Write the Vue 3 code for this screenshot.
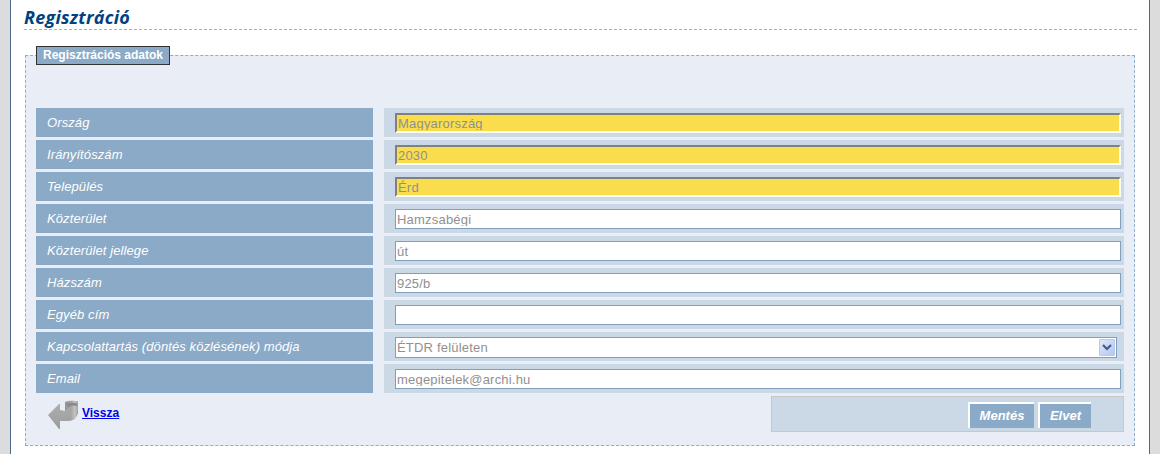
<script setup>
const rows = [
  { label: 'Ország', value: 'Magyarország', required: true },
  { label: 'Irányítószám', value: '2030', required: true },
  { label: 'Település', value: 'Érd', required: true },
  { label: 'Közterület', value: 'Hamzsabégi' },
  { label: 'Közterület jellege', value: 'út' },
  { label: 'Házszám', value: '925/b' },
  { label: 'Egyéb cím', value: '' },
  { label: 'Kapcsolattartás (döntés közlésének) módja', value: 'ÉTDR felületen', select: true },
  { label: 'Email', value: 'megepitelek@archi.hu' }
]
</script>

<template>
  <div class="page">
    <main class="sheet">
      <h1 class="title">Regisztráció</h1>
      <section class="panel">
        <div class="legend">Regisztrációs adatok</div>
        <div class="rows">
          <div v-for="row in rows" :key="row.label" class="row">
            <div class="label">{{ row.label }}</div>
            <div class="cell">
              <div v-if="row.select" class="select-wrap">
                <select class="select"><option>{{ row.value }}</option></select>
                <span class="select-btn">
                  <svg width="10" height="7" viewBox="0 0 10 7"><path d="M1 1 L5 5 L9 1" fill="none" stroke="#4a5a80" stroke-width="2.2"/></svg>
                </span>
              </div>
              <div v-else class="field" :class="{ required: row.required }">
                <input class="field-input" type="text" readonly :value="row.value" />
              </div>
            </div>
          </div>
        </div>
        <div class="footer">
          <a class="back" href="#">
            <svg class="back-icon" width="32" height="30" viewBox="0 0 32 30">
              <defs>
                <linearGradient id="arrowBody" x1="0" y1="0" x2="0" y2="1">
                  <stop offset="0" stop-color="#b0b0b0"/>
                  <stop offset="1" stop-color="#9c9c9c"/>
                </linearGradient>
                <linearGradient id="arrowCurl" x1="0" y1="0" x2="1" y2="0">
                  <stop offset="0" stop-color="#949494"/>
                  <stop offset="0.5" stop-color="#a8a8a8"/>
                  <stop offset="0.75" stop-color="#c4c4c4"/>
                  <stop offset="1" stop-color="#a0a0a0"/>
                </linearGradient>
              </defs>
              <path d="M0 15 L11 4 L12 4 L12 10 L17 11 L17 2 Q24 0 30 1.5 L30 13 Q28 20 21 21 L12 21 L12 29 L11 29 Z" fill="url(#arrowBody)"/>
              <path d="M17 2 Q24 0 30 1.5 L30 13 Q28 19 22 20.5 L23 9 Q21 7 17 11 Z" fill="url(#arrowCurl)"/>
              <path d="M18 4 Q24 2 29 3.5 L29 6 Q24 4.5 20 7 Z" fill="#8a8a8a"/>
            </svg>
            <span class="back-text">Vissza</span>
          </a>
          <div class="actions">
            <button class="btn save" type="button">Mentés</button>
            <button class="btn cancel" type="button">Elvet</button>
          </div>
        </div>
      </section>
    </main>
  </div>
</template>

<style>
html, body { margin: 0; padding: 0; background: #dcdbdd; }
</style>

<style scoped>
.page {
  display: flex;
  height: 454px;
  width: 1160px;
  padding: 0 10px;
  box-sizing: border-box;
  font-family: "Liberation Sans", Arial, sans-serif;
  background: #dcdbdd;
  overflow: hidden;
}
.sheet {
  flex: 1;
  min-width: 0;
  background: #fff;
  border-left: 1px solid #4f6a89;
  border-right: 1px solid #4f6a89;
  padding: 0 12px 0 13px;
}
.title {
  margin: 0;
  height: 30px;
  box-sizing: border-box;
  padding-top: 6px;
  border-bottom: 1px dashed #9db3c9;
  font: italic 700 18px/23px "Open Sans", sans-serif;
  letter-spacing: 0.25px;
  color: #00427f;
}
.panel {
  margin: 25px 2px 0 1px;
  height: 391px;
  box-sizing: border-box;
  border: 1px dashed #8fadc8;
  background: #e9edf5;
  padding: 0 10px;
}
.legend {
  margin-top: -10px;
  height: 19px;
  width: 134px;
  box-sizing: border-box;
  padding: 0 6px;
  border: 1px solid #333;
  background: #8aaac8;
  color: #fff;
  font: 700 12px/17px "Liberation Sans", sans-serif;
  white-space: nowrap;
}
.rows {
  display: flex;
  flex-direction: column;
  gap: 3px;
  margin-top: 43px;
}
.row {
  display: flex;
  gap: 11px;
  height: 29px;
}
.label {
  width: 337px;
  box-sizing: border-box;
  padding-left: 11px;
  background: #8aaac8;
  color: #fff;
  font: italic 13px/29px "Liberation Sans", sans-serif;
  letter-spacing: 0.1px;
}
.cell {
  width: 740px;
  box-sizing: border-box;
  background: #cbd9e6;
  padding: 5px 3px 0 11px;
}
.field {
  height: 20px;
  box-sizing: border-box;
  padding: 2px 1px;
  border: 1px solid #7f9fbd;
  background: #fff;
}
.field-input {
  display: block;
  width: 100%;
  height: 14px;
  margin: 0;
  padding: 0;
  border: 0;
  border-radius: 0;
  outline: none;
  background: transparent;
  color: #909090;
  font: 13px "Liberation Sans", sans-serif;
  letter-spacing: 0.2px;
}
.required {
  background: #fadd4d;
  border-width: 2px;
  border-color: #808080 #fdfdf0 #fdfdf0 #808080;
  padding: 1px 0 1px 1px;
}
.select-wrap {
  position: relative;
  width: 722px;
}
.select {
  display: block;
  width: 100%;
  height: 21px;
  box-sizing: border-box;
  margin: 0;
  padding: 0 0 0 1px;
  border: 1px solid #7f9fbd;
  border-radius: 0;
  outline: none;
  appearance: none;
  -webkit-appearance: none;
  background: #fff;
  color: #909090;
  font: 13px/19px "Liberation Sans", sans-serif;
  letter-spacing: 0.2px;
}
.select-btn {
  position: absolute;
  top: 2px;
  right: 2px;
  width: 16px;
  height: 17px;
  display: flex;
  align-items: center;
  justify-content: center;
  background: linear-gradient(135deg, #dfe8fb, #b3c7f4);
  border: 1px solid #b9c9ee;
  box-sizing: border-box;
  border-radius: 1px;
}
.footer {
  display: flex;
  justify-content: space-between;
  align-items: flex-start;
  margin-top: 3px;
}
.back {
  display: flex;
  align-items: flex-start;
  margin: 4px 0 0 12px;
  color: #0000ee;
  font: 700 12px/14px "Liberation Sans", sans-serif;
}
.back-icon { display: block; margin-right: 2px; }
.back-text {
  margin-top: 6px;
  text-decoration: underline;
}
.actions {
  width: 353px;
  height: 36px;
  box-sizing: border-box;
  border: 1px solid #c8c8c8;
  background: #cbd9e6;
  display: flex;
  justify-content: flex-end;
  align-items: flex-start;
  gap: 4px;
  padding: 5px 32px 0 0;
}
.btn {
  height: 26px;
  padding: 0;
  box-sizing: border-box;
  border-style: solid;
  border-width: 2px 0 0 2px;
  border-color: #fff;
  background: #8aaac8;
  color: #fff;
  font: italic 700 13px/22px "Liberation Sans", sans-serif;
  cursor: pointer;
}
.save { width: 66px; }
.cancel { width: 53px; }
</style>
